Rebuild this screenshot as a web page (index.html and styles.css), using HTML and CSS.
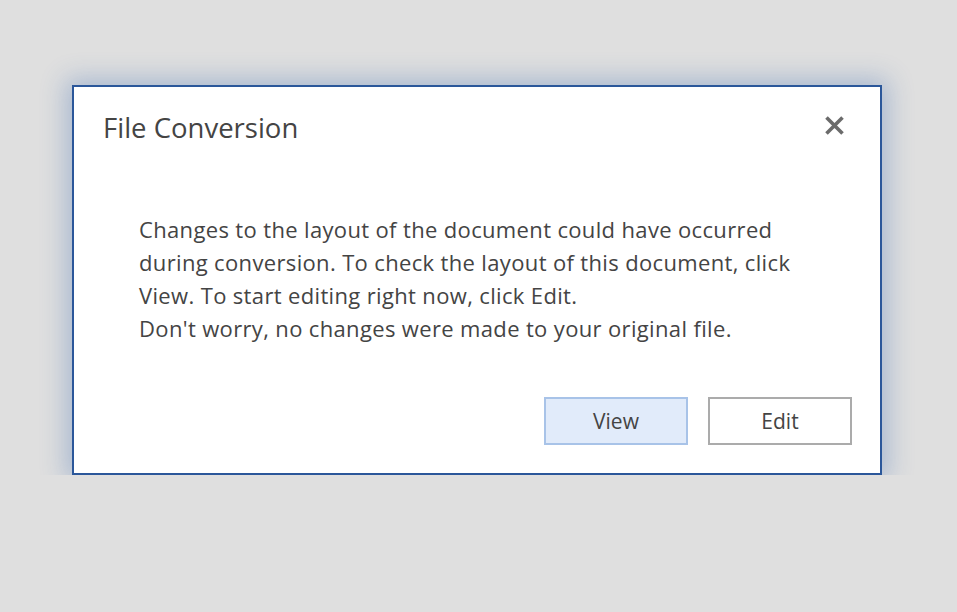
FILE: index.html
```html
<!DOCTYPE html><html lang="en">
<head>
  <meta charset="UTF-8">
  <meta name="viewport" content="width=device-width, initial-scale=1.0">
  <title>File Conversion</title>
  <link rel="stylesheet" href="styles.css">
</head>
<body>
  <div class="dialog">
    <div class="dialog-head">
      <h1>File Conversion</h1>
      <button class="close" aria-label="Close">
        <svg width="21" height="21" viewBox="0 0 21 21">
          <path d="M2.5 2.5 L18.5 18.5 M18.5 2.5 L2.5 18.5" stroke="#6b6b6b" stroke-width="3.6" fill="none"/>
        </svg>
      </button>
    </div>
    <div class="dialog-body">
      <p>Changes to the layout of the document could have occurred during conversion. To check the layout of this document, click View. To start editing right now, click Edit.</p>
      <p>Don't worry, no changes were made to your original file.</p>
    </div>
    <div class="dialog-actions">
      <button class="btn primary">View</button>
      <button class="btn">Edit</button>
    </div>
  </div>
</body>
</html>
```

FILE: styles.css
```css
body {
  margin: 0;
  background: #dfdfdf;
  font-family: 'Open Sans', 'Noto Sans', sans-serif;
  color: #444;
}
.dialog {
  box-sizing: border-box;
  width: 810px;
  height: 390px;
  margin: 85px 0 0 72px;
  background: #fff;
  border: 2px solid #2b579a;
  box-shadow: 0 0 24px 6px rgba(43, 95, 175, 0.3);
  display: flex;
  flex-direction: column;
}
.dialog-head {
  display: flex;
  justify-content: space-between;
  align-items: center;
  padding: 21px 35px 0 29px;
}
.dialog-head h1 {
  margin: 0;
  font-size: 27.5px;
  font-weight: normal;
  line-height: 40px;
  color: #444;
}
.close {
  background: none;
  border: none;
  padding: 0;
  width: 21px;
  height: 21px;
  margin-top: -6px;
  cursor: pointer;
}
.dialog-body {
  padding: 65px 0 0 65px;
  max-width: 665px;
  font-size: 22px;
  letter-spacing: 0.35px;
  line-height: 33px;
}
.dialog-body p {
  margin: 0;
}
.dialog-actions {
  margin-top: auto;
  display: flex;
  justify-content: flex-end;
  gap: 20px;
  padding: 0 28px 28px 0;
}
.btn {
  box-sizing: border-box;
  width: 144px;
  height: 48px;
  background: #fff;
  border: 2px solid #ababab;
  font-family: inherit;
  font-size: 21px;
  color: #444;
  cursor: pointer;
}
.btn.primary {
  background: #e1ebfa;
  border-color: #a8c3e8;
}
```
